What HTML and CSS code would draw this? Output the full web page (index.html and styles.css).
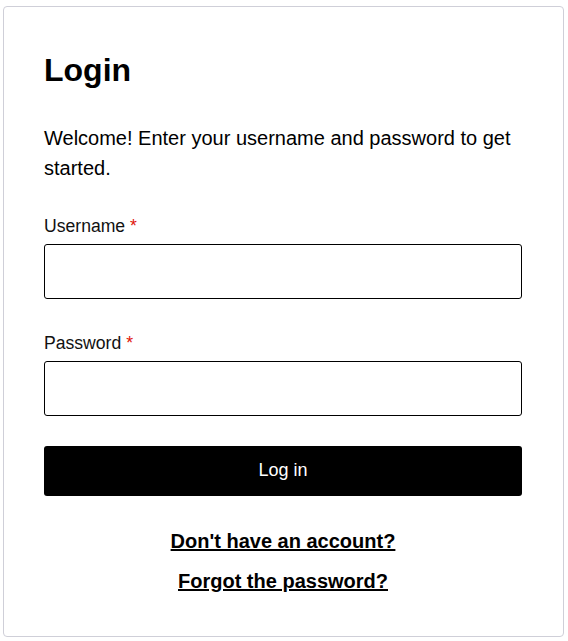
FILE: index.html
```html
<!DOCTYPE html>
<html lang="en">
<head>
<meta charset="utf-8">
<title>Login</title>
<link rel="stylesheet" href="styles.css">
</head>
<body>
<main class="card">
  <h1 class="title">Login</h1>
  <p class="intro">Welcome! Enter your username and password to get started.</p>
  <form class="form">
    <div class="field">
      <label class="label" for="username">Username <span class="req">*</span></label>
      <input class="input" id="username" type="text">
    </div>
    <div class="field">
      <label class="label" for="password">Password <span class="req">*</span></label>
      <input class="input" id="password" type="password">
    </div>
    <button class="btn" type="button">Log in</button>
  </form>
  <div class="links">
    <a class="link" href="#">Don't have an account?</a>
    <a class="link" href="#">Forgot the password?</a>
  </div>
</main>
</body>
</html>
```
FILE: styles.css
```css
* { box-sizing: border-box; }
html, body { margin: 0; padding: 0; background: #fff; }
body {
  font-family: "Liberation Sans", Arial, sans-serif;
  color: #000;
}
.card {
  margin: 6px 0 0 3px;
  width: 561px;
  height: 631px;
  border: 1px solid #cfcfd8;
  border-radius: 4px;
  padding: 40px 41px 40px 40px;
  display: flex;
  flex-direction: column;
}
.title {
  margin: 0;
  font-size: 32px;
  line-height: 46px;
  font-weight: 700;
}
.intro {
  margin: 30px 0 0;
  font-size: 20px;
  line-height: 30px;
}
.form {
  display: flex;
  flex-direction: column;
  margin-top: 32px;
}
.field {
  display: flex;
  flex-direction: column;
  gap: 7px;
  margin-bottom: 33px;
}
.field + .field { margin-bottom: 30px; }
.label {
  font-size: 17.6px;
  line-height: 22px;
  color: #111;
}
.req { color: #e0140a; }
.input {
  height: 55px;
  border: 1px solid #000;
  border-radius: 3px;
  background: #fff;
  font: inherit;
  padding: 0 12px;
}
.btn {
  height: 50px;
  padding: 0 0 2px;
  border: 0;
  border-radius: 3px;
  background: #000;
  color: #fff;
  font-family: inherit;
  font-size: 18px;
  cursor: pointer;
}
.links {
  margin-top: 33px;
  display: flex;
  flex-direction: column;
  align-items: center;
  gap: 16px;
}
.link {
  color: #000;
  font-size: 20px;
  line-height: 24px;
  font-weight: 700;
  text-decoration: underline;
}
```
